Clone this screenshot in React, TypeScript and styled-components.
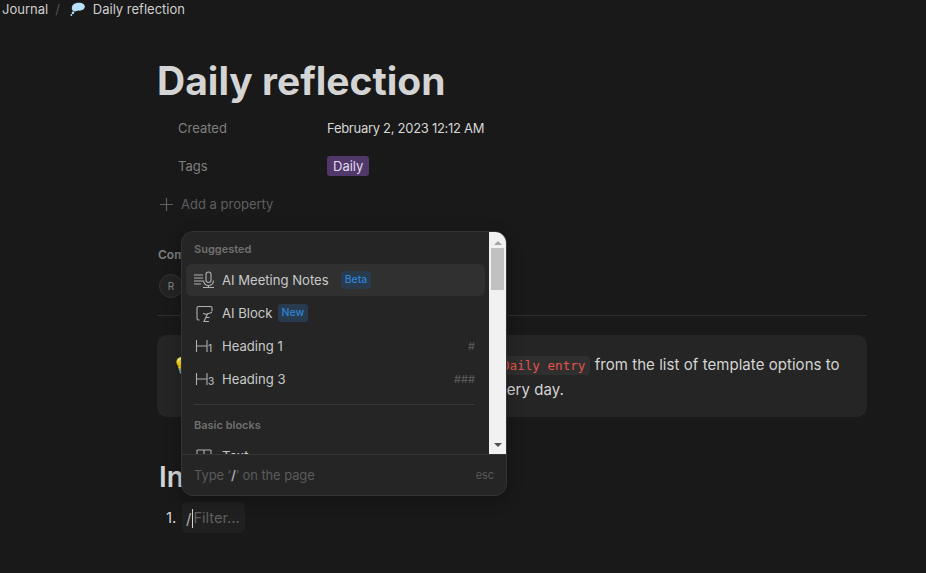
import React from "react"
import styled, { createGlobalStyle } from "styled-components"

const GlobalStyle = createGlobalStyle`
  html, body {
    margin: 0;
    padding: 0;
    height: 100%;
    background: #191919;
  }
  body {
    font-family: Inter, "Noto Sans", sans-serif;
    color: #d4d4d4;
    overflow: hidden;
  }
`

const Page = styled.div`
  position: relative;
  width: 926px;
  height: 573px;
  overflow: hidden;
  background: #191919;
`

const Breadcrumb = styled.div`
  display: flex;
  align-items: center;
  height: 18px;
  padding-left: 2px;
  font-size: 13px;
  color: #cfcfcf;
`

const Slash = styled.span`
  margin: 0 10px 0 7px;
  color: #555;
`

const CrumbIcon = styled.svg`
  width: 15px;
  height: 14px;
  margin-right: 8px;
`

const Content = styled.main`
  width: 710px;
  margin-left: 157px;
`

const Title = styled.h1`
  margin: 40px 0 0;
  font-size: 39px;
  line-height: 46px;
  font-weight: 700;
  color: #d4d4d4;
`

const Properties = styled.div`
  margin-top: 5px;
  padding-left: 21px;
  font-size: 13px;
`

const PropertyRow = styled.div`
  display: flex;
  align-items: center;
  height: 38px;
`

const PropertyName = styled.div`
  width: 149px;
  color: #7f7f7f;
`

const PropertyValue = styled.div`
  color: #d6d6d6;
`

const DateValue = styled(PropertyValue)`
  letter-spacing: -0.28px;
`

const TagChip = styled.span`
  display: inline-block;
  padding: 0 6px;
  line-height: 20px;
  border-radius: 3px;
  background: #50386b;
  color: #e4dcee;
`

const AddProperty = styled.div`
  display: flex;
  align-items: center;
  gap: 7px;
  height: 38px;
  margin-left: 2px;
  font-size: 13px;
  color: #5f5f5f;
`

const CommentsLabel = styled.div`
  margin: 24px 0 0 1px;
  font-size: 12px;
  line-height: 16px;
  font-weight: 600;
  color: #7f7f7f;
`

const Avatar = styled.div`
  display: flex;
  align-items: center;
  justify-content: center;
  width: 22px;
  height: 22px;
  margin: 11px 0 0 2px;
  border: 1px solid #333;
  border-radius: 50%;
  background: #232323;
  font-size: 10px;
  color: #8a8a8a;
`

const Divider = styled.div`
  height: 1px;
  margin-top: 17px;
  background: #2e2e2e;
`

const Callout = styled.div`
  position: relative;
  height: 82px;
  margin-top: 19px;
  padding-top: 18px;
  box-sizing: border-box;
  border-radius: 10px;
  background: #252525;
  font-size: 15px;
  line-height: 24px;
`

const CalloutEmoji = styled.span`
  position: absolute;
  left: 15px;
  top: 18px;
  font-size: 16px;
`

const CalloutLine = styled.div<{ $indent: number }>`
  margin-left: ${(p) => p.$indent}px;
  white-space: nowrap;
  letter-spacing: 0.05px;
  color: #d4d4d4;
`

const Code = styled.code`
  padding: 2px 5px;
  border-radius: 4px;
  background: #2f2f2f;
  font-family: "DejaVu Sans Mono", "Liberation Mono", monospace;
  font-size: 12.6px;
  letter-spacing: 0;
  color: #e5534b;
`

const Heading = styled.h2`
  margin: 40px 0 0 2px;
  font-size: 28px;
  line-height: 40px;
  font-weight: 600;
  color: #d4d4d4;
`

const ListItem = styled.div`
  display: flex;
  align-items: center;
  height: 31px;
  margin-top: 5px;
  font-size: 15px;
`

const ListNumber = styled.span`
  width: 25px;
  padding-left: 9px;
  box-sizing: border-box;
`

const FilterBox = styled.div`
  display: flex;
  align-items: center;
  width: 63px;
  height: 31px;
  padding: 1px 0 0 4px;
  box-sizing: border-box;
  border-radius: 5px;
  background: #202020;
  font-size: 14.6px;
  color: #5f5f5f;
`

const Slashed = styled.span`
  color: #b0b0b0;
  font-size: 15px;
  border-right: 1px solid #d4d4d4;
  padding-right: 1px;
`

const Menu = styled.div`
  position: absolute;
  left: 181px;
  top: 231px;
  width: 326px;
  height: 265px;
  display: flex;
  flex-direction: column;
  box-sizing: border-box;
  border: 1px solid #333;
  border-radius: 12px;
  background: #252525;
  overflow: hidden;
  box-shadow: 0 4px 16px rgba(0, 0, 0, 0.3);
`

const MenuBody = styled.div`
  display: flex;
  height: 222px;
  border-bottom: 1px solid #363636;
`

const MenuList = styled.div`
  flex: 1;
  min-width: 0;
  overflow: hidden;
  padding: 0 4px;
`

const GroupLabel = styled.div`
  height: 16px;
  margin: 9px 0 7px;
  padding-left: 8px;
  font-size: 11px;
  line-height: 16px;
  font-weight: 600;
  color: #6f6f6f;
`

const MenuItem = styled.div<{ $active?: boolean }>`
  display: flex;
  align-items: center;
  height: 32px;
  margin-bottom: 1px;
  padding: 0 10px 0 7px;
  border-radius: 6px;
  font-size: 13.1px;
  color: #c9c9c9;
  background: ${(p) => (p.$active ? "#303030" : "transparent")};
`

const ItemIcon = styled.svg`
  flex: none;
  width: 22px;
  height: 20px;
  margin-right: 7px;
  fill: none;
  stroke: #b0b0b0;
  stroke-width: 1.1;
`

const Badge = styled.span<{ $gap: number }>`
  margin-left: ${(p) => p.$gap}px;
  padding: 0 4px;
  line-height: 18px;
  border-radius: 3px;
  background: #283a4d;
  font-size: 10.5px;
  font-weight: 500;
  color: #2f83d6;
`

const Shortcut = styled.span`
  margin-left: auto;
  font-size: 11px;
  color: #5f5f5f;
`

const MenuRule = styled.div`
  height: 1px;
  margin: 9px 10px 12px 8px;
  background: #383838;
`

const Scrollbar = styled.div`
  flex: none;
  display: flex;
  flex-direction: column;
  align-items: center;
  width: 17px;
  background: #f1f1f1;
`

const ScrollThumb = styled.div`
  width: 13px;
  height: 42px;
  margin-top: 3px;
  background: #c1c1c1;
`

const Arrow = styled.div<{ $down?: boolean }>`
  width: 0;
  height: 0;
  margin-top: ${(p) => (p.$down ? "auto" : "9px")};
  margin-bottom: ${(p) => (p.$down ? "7px" : "0")};
  border-left: 4px solid transparent;
  border-right: 4px solid transparent;
  border-bottom: ${(p) => (p.$down ? "0" : "4px solid #a3a3a3")};
  border-top: ${(p) => (p.$down ? "4px solid #505050" : "0")};
`

const MenuFooter = styled.div`
  display: flex;
  align-items: center;
  justify-content: space-between;
  flex: 1;
  padding: 0 12px;
  font-size: 13px;
  letter-spacing: -0.1px;
  color: #5a5a5a;
`

const FooterSlash = styled.b`
  color: #a8a8a8;
  font-weight: 600;
`

const Esc = styled.span`
  font-size: 11px;
`

const HeadingIcon = ({ level }: { level: string }) => (
  <ItemIcon viewBox="0 0 22 20">
    <path d="M3.5 4v12M14 4v12M3.5 10H14" />
    <text x="15" y="15.5" fontSize="10" fontFamily="Inter" fontWeight="500" fill="#b0b0b0" stroke="none">
      {level}
    </text>
  </ItemIcon>
)

export default function App() {
  return (
    <Page>
      <GlobalStyle />
      <Breadcrumb>
        Journal
        <Slash>/</Slash>
        <CrumbIcon viewBox="0 0 15 14">
          <path
            d="M7.5.8C11 .3 14.8 1.6 14.8 4.6c0 2.8-3 4.3-6.3 4L4.8 9.6C2.4 9.2 1.4 7 1.9 4.9 2.4 2.5 5 1.1 7.5.8z"
            fill="#b8e0f8"
          />
          <circle cx="3" cy="10.8" r="1.3" fill="#b8e0f8" />
          <circle cx="1.4" cy="13" r=".9" fill="#b8e0f8" />
        </CrumbIcon>
        Daily reflection
      </Breadcrumb>

      <Content>
        <Title>Daily reflection</Title>
        <Properties>
          <PropertyRow>
            <PropertyName>Created</PropertyName>
            <DateValue>February 2, 2023 12:12 AM</DateValue>
          </PropertyRow>
          <PropertyRow>
            <PropertyName>Tags</PropertyName>
            <PropertyValue>
              <TagChip>Daily</TagChip>
            </PropertyValue>
          </PropertyRow>
        </Properties>
        <AddProperty>
          <svg width="15" height="15" viewBox="0 0 15 15" stroke="#5f5f5f" strokeWidth="1.2">
            <path d="M7.5 1v13M1 7.5h13" />
          </svg>
          Add a property
        </AddProperty>
        <CommentsLabel>Comments</CommentsLabel>
        <Avatar>R</Avatar>
        <Divider />
        <Callout>
          <CalloutEmoji>💡</CalloutEmoji>
          <CalloutLine $indent={340}>
            <Code>Daily entry</Code> from the list of template options to
          </CalloutLine>
          <CalloutLine $indent={333}>every day.</CalloutLine>
        </Callout>
        <Heading>Intention</Heading>
        <ListItem>
          <ListNumber>1.</ListNumber>
          <FilterBox>
            <Slashed>/</Slashed>Filter...
          </FilterBox>
        </ListItem>
      </Content>

      <Menu>
        <MenuBody>
          <MenuList>
            <GroupLabel>Suggested</GroupLabel>
            <MenuItem $active>
              <ItemIcon viewBox="0 0 22 20">
                <path d="M1 5h9M1 8h9M1 11h9M1 14h7M13 10V4.5a2.5 2.5 0 0 1 5 0V10a2.5 2.5 0 0 1-5 0zM10.5 10.5a5 5 0 0 0 10 0M15.5 15.5v2M10 17.5h11" />
              </ItemIcon>
              AI Meeting Notes
              <Badge $gap={12}>Beta</Badge>
            </MenuItem>
            <MenuItem>
              <ItemIcon viewBox="0 0 22 20">
                <path d="M6.5 17H5.5A1.5 1.5 0 0 1 4 15.5V5a1.5 1.5 0 0 1 1.5-1.5h12A1.5 1.5 0 0 1 19 5v3.5M10 10.5l3 .8 6-1.8M14.5 11l-3.5 7.5h5M12.5 14.5h4" />
              </ItemIcon>
              AI Block
              <Badge $gap={5}>New</Badge>
            </MenuItem>
            <MenuItem>
              <HeadingIcon level="1" />
              Heading 1
              <Shortcut>#</Shortcut>
            </MenuItem>
            <MenuItem>
              <HeadingIcon level="3" />
              Heading 3
              <Shortcut>###</Shortcut>
            </MenuItem>
            <MenuRule />
            <GroupLabel>Basic blocks</GroupLabel>
            <MenuItem>
              <ItemIcon viewBox="0 0 22 20">
                <path d="M4 4h14M4 4v12M18 4v12M11 4v8" />
              </ItemIcon>
              Text
            </MenuItem>
          </MenuList>
          <Scrollbar>
            <Arrow />
            <ScrollThumb />
            <Arrow $down />
          </Scrollbar>
        </MenuBody>
        <MenuFooter>
          <span>
            Type ‘<FooterSlash>/</FooterSlash>’ on the page
          </span>
          <Esc>esc</Esc>
        </MenuFooter>
      </Menu>
    </Page>
  )
}
